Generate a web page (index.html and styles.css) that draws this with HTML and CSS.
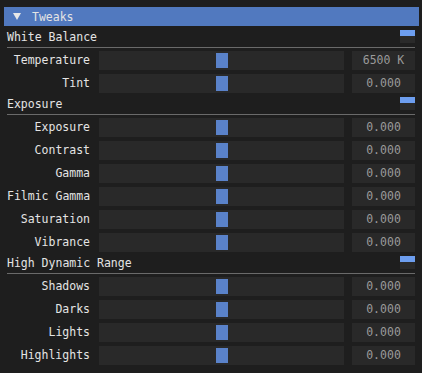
FILE: index.html
```html
<!DOCTYPE html>
<html lang="en">
<head>
    <meta charset="UTF-8">
    <title>Tweaks</title>
    <link rel="stylesheet" href="styles.css">
</head>
<body>
    <div class="window">
        <div class="titlebar">
            <svg class="arrow" width="8" height="7" viewBox="0 0 8 7"><polygon points="0,0 8,0 4,7" fill="#e8e8e8"/></svg>
            <span>Tweaks</span>
        </div>

        <div class="section">
            <div class="section-head"><span>White Balance</span><span class="toggle"></span></div>
            <div class="sep"></div>
            <div class="row"><label>Temperature</label><div class="slider"><div class="grab"></div></div><div class="value">6500 K</div></div>
            <div class="row"><label>Tint</label><div class="slider"><div class="grab"></div></div><div class="value">0.000</div></div>
        </div>

        <div class="section">
            <div class="section-head"><span>Exposure</span><span class="toggle"></span></div>
            <div class="sep"></div>
            <div class="row"><label>Exposure</label><div class="slider"><div class="grab"></div></div><div class="value">0.000</div></div>
            <div class="row"><label>Contrast</label><div class="slider"><div class="grab"></div></div><div class="value">0.000</div></div>
            <div class="row"><label>Gamma</label><div class="slider"><div class="grab"></div></div><div class="value">0.000</div></div>
            <div class="row"><label>Filmic Gamma</label><div class="slider"><div class="grab"></div></div><div class="value">0.000</div></div>
            <div class="row"><label>Saturation</label><div class="slider"><div class="grab"></div></div><div class="value">0.000</div></div>
            <div class="row"><label>Vibrance</label><div class="slider"><div class="grab"></div></div><div class="value">0.000</div></div>
        </div>

        <div class="section">
            <div class="section-head"><span>High Dynamic Range</span><span class="toggle"></span></div>
            <div class="sep"></div>
            <div class="row"><label>Shadows</label><div class="slider"><div class="grab"></div></div><div class="value">0.000</div></div>
            <div class="row"><label>Darks</label><div class="slider"><div class="grab"></div></div><div class="value">0.000</div></div>
            <div class="row"><label>Lights</label><div class="slider"><div class="grab"></div></div><div class="value">0.000</div></div>
            <div class="row"><label>Highlights</label><div class="slider"><div class="grab"></div></div><div class="value">0.000</div></div>
        </div>
    </div>
</body>
</html>
```

FILE: styles.css
```css
body {
    margin: 0;
    padding: 0;
    background-color: #1e1e1e;
    font-family: "DejaVu Sans Mono", monospace;
    font-size: 11.5px;
    color: #e4e4e4;
}
.window {
    width: 422px;
    height: 373px;
    padding-top: 7px;
    box-sizing: border-box;
    overflow: hidden;
}
.titlebar {
    margin: 0 3px 0 4px;
    height: 19px;
    background-color: #5179bf;
    display: flex;
    align-items: center;
}
.arrow {
    margin-left: 9px;
    margin-right: 11px;
}
.section {
    padding: 0 7px;
}
.section-head {
    margin-top: 4px;
    height: 13px;
    display: flex;
    justify-content: space-between;
    align-items: center;
    line-height: 13px;
}
.section-head span:first-child {
    margin-top: 1px;
}
.toggle {
    width: 15px;
    height: 13px;
    background: linear-gradient(#6d9eef 0 6px, #2a2a2a 6px);
}
.sep {
    margin-top: 4px;
    height: 1px;
    background-color: #6a6a6a;
}
.row {
    display: flex;
    align-items: center;
    height: 19px;
    margin-top: 3px;
}
.row + .row {
    margin-top: 4px;
}
.row label {
    flex: 0 0 83px;
    text-align: right;
    white-space: nowrap;
    margin-right: 9px;
    padding-bottom: 2px;
}
.slider {
    flex: 0 0 245px;
    height: 19px;
    background-color: #292929;
    display: flex;
    align-items: center;
    justify-content: center;
}
.grab {
    width: 12px;
    height: 15px;
    background-color: #5a82c9;
}
.value {
    flex: 0 0 63px;
    margin-left: 8px;
    height: 19px;
    background-color: #292929;
    color: #9a9a9a;
    text-align: center;
    line-height: 18px;
}
```
